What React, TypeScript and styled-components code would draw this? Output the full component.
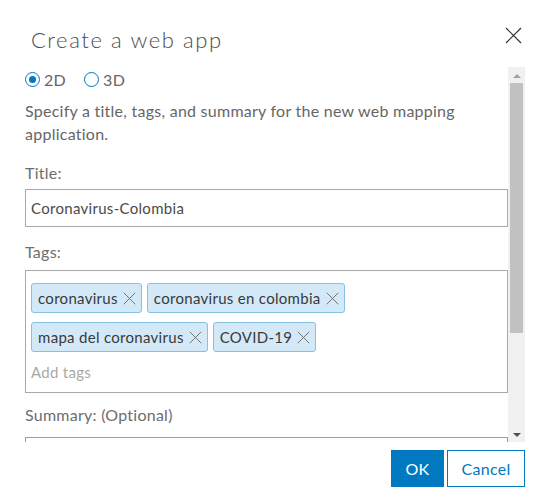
import styled, { createGlobalStyle } from 'styled-components';

const tags = ['coronavirus', 'coronavirus en colombia', 'mapa del coronavirus', 'COVID-19'];

const GlobalStyle = createGlobalStyle`
  html, body {
    margin: 0;
    padding: 0;
    background: #fff;
  }
  body {
    font-family: Lato, "Open Sans", "Liberation Sans", sans-serif;
  }
`;

function CloseIcon({ size = 17, color = '#333' }) {
  return (
    <svg width={size} height={size} viewBox="0 0 17 17" fill="none">
      <path d="M1 1 L16 16 M16 1 L1 16" stroke={color} strokeWidth="1.2" />
    </svg>
  );
}

function App() {
  return (
    <>
      <GlobalStyle />
      <Dialog>
        <Header>
          <Heading>Create a web app</Heading>
          <CloseButton aria-label="Close">
            <CloseIcon />
          </CloseButton>
        </Header>

        <Body>
          <Viewport>
            <RadioRow>
              <RadioOption>
                <Radio checked />
                2D
              </RadioOption>
              <RadioOption>
                <Radio />
                3D
              </RadioOption>
            </RadioRow>

            <Description>
              Specify a title, tags, and summary for the new web mapping application.
            </Description>

            <Label $gap={16}>Title:</Label>
            <TextInput>Coronavirus-Colombia</TextInput>

            <Label $gap={13}>Tags:</Label>
            <TagBox>
              <TagList>
                {tags.map(tag => (
                  <Tag key={tag}>
                    {tag}
                    <CloseIcon size={13} color="#6a6a6a" />
                  </Tag>
                ))}
              </TagList>
              <Placeholder>Add tags</Placeholder>
            </TagBox>

            <Label $gap={10}>Summary: (Optional)</Label>
            <SummaryBox />
          </Viewport>

          <Scrollbar>
            <ScrollButton>
              <ArrowUp />
            </ScrollButton>
            <ThumbTrack>
              <Thumb style={{ height: `${(375 / 514) * 100}%` }} />
            </ThumbTrack>
            <ScrollButton>
              <ArrowDown />
            </ScrollButton>
          </Scrollbar>
        </Body>

        <Footer>
          <PrimaryButton>OK</PrimaryButton>
          <SecondaryButton>Cancel</SecondaryButton>
        </Footer>
      </Dialog>
    </>
  );
}

export default App;

const Dialog = styled.div`
  width: 538px;
  height: 504px;
  background: #fff;
  display: flex;
  flex-direction: column;
  overflow: hidden;
`;

const Header = styled.div`
  height: 67px;
  box-sizing: border-box;
  padding: 26px 16px 0 31px;
  display: flex;
  justify-content: space-between;
  align-items: flex-start;
`;

const Heading = styled.h2`
  margin: 0;
  font-size: 22px;
  line-height: 28px;
  font-weight: 300;
  letter-spacing: 1.6px;
  color: #4c4c4c;
`;

const CloseButton = styled.button`
  border: none;
  background: none;
  padding: 0;
  margin-top: 1px;
  display: flex;
  cursor: pointer;
`;

const Body = styled.div`
  display: flex;
  height: 375px;
  width: 525px;
`;

const Viewport = styled.div`
  flex: 1;
  overflow: hidden;
  padding-left: 25px;
  font-size: 15px;
  letter-spacing: 0.3px;
  color: #666;
`;

const RadioRow = styled.div`
  height: 24px;
  display: flex;
  align-items: center;
  gap: 18px;
`;

const RadioOption = styled.label`
  display: flex;
  align-items: center;
  gap: 4px;
  font-size: 16px;
  color: #666;
`;

const Radio = styled.span<{ checked?: boolean }>`
  width: 15px;
  height: 15px;
  box-sizing: border-box;
  border: 1px solid #0079c1;
  border-radius: 50%;
  display: flex;
  align-items: center;
  justify-content: center;

  &::after {
    content: '';
    width: 7px;
    height: 7px;
    border-radius: 50%;
    background: #0079c1;
    display: ${props => (props.checked ? 'block' : 'none')};
  }
`;

const Description = styled.p`
  margin: 8px 0 0;
  font-size: 16px;
  letter-spacing: 0.25px;
  line-height: 23px;
  padding-right: 30px;
`;

const Label = styled.div<{ $gap: number }>`
  margin-top: ${props => props.$gap}px;
  font-size: 16px;
  letter-spacing: 0.25px;
  line-height: 23px;
  color: #6e6e6e;
`;

const TextInput = styled.div`
  margin-top: 5px;
  height: 38px;
  box-sizing: border-box;
  border: 1px solid #a9a9a9;
  padding: 0 5px;
  display: flex;
  align-items: center;
  color: #4a4a4a;
`;

const TagBox = styled.div`
  margin-top: 7px;
  height: 123px;
  box-sizing: border-box;
  border: 1px solid #a9a9a9;
  padding: 12px 6px 0 5px;
`;

const TagList = styled.div`
  display: flex;
  flex-wrap: wrap;
  gap: 9px 5px;
`;

const Tag = styled.span`
  height: 30px;
  box-sizing: border-box;
  display: inline-flex;
  align-items: center;
  gap: 5px;
  padding: 0 5px 0 6px;
  background: #d3e9f8;
  border: 1px solid #86c0e6;
  border-radius: 3px;
  color: #3a3a3a;
`;

const Placeholder = styled.div`
  margin-top: 9px;
  line-height: 23px;
  color: #a8a8a8;
`;

const SummaryBox = styled.div`
  margin-top: 11px;
  height: 80px;
  border: 1px solid #8ea2b6;
`;

const Scrollbar = styled.div`
  width: 17px;
  background: #f1f1f1;
  display: flex;
  flex-direction: column;
`;

const ScrollButton = styled.div`
  height: 16px;
  display: flex;
  align-items: center;
  justify-content: center;
`;

const ArrowUp = styled.span`
  width: 0;
  height: 0;
  border-left: 4px solid transparent;
  border-right: 4px solid transparent;
  border-bottom: 4px solid #a3a3a3;
  margin-top: 2px;
`;

const ArrowDown = styled.span`
  width: 0;
  height: 0;
  border-left: 4px solid transparent;
  border-right: 4px solid transparent;
  border-top: 4px solid #505050;
  margin-top: 2px;
`;

const ThumbTrack = styled.div`
  flex: 1;
  padding: 0 2px;
`;

const Thumb = styled.div`
  background: #c1c1c1;
`;

const Footer = styled.div`
  display: flex;
  justify-content: flex-end;
  gap: 3px;
  padding: 8px 13px 0 0;
`;

const BaseButton = styled.button`
  height: 37px;
  box-sizing: border-box;
  font-family: inherit;
  font-size: 16px;
  letter-spacing: 0.3px;
  border: 1px solid #0079c1;
  padding: 0;
  cursor: pointer;
`;

const PrimaryButton = styled(BaseButton)`
  width: 53px;
  background: #0079c1;
  color: #fff;
`;

const SecondaryButton = styled(BaseButton)`
  width: 78px;
  background: #fff;
  color: #0079c1;
`;
